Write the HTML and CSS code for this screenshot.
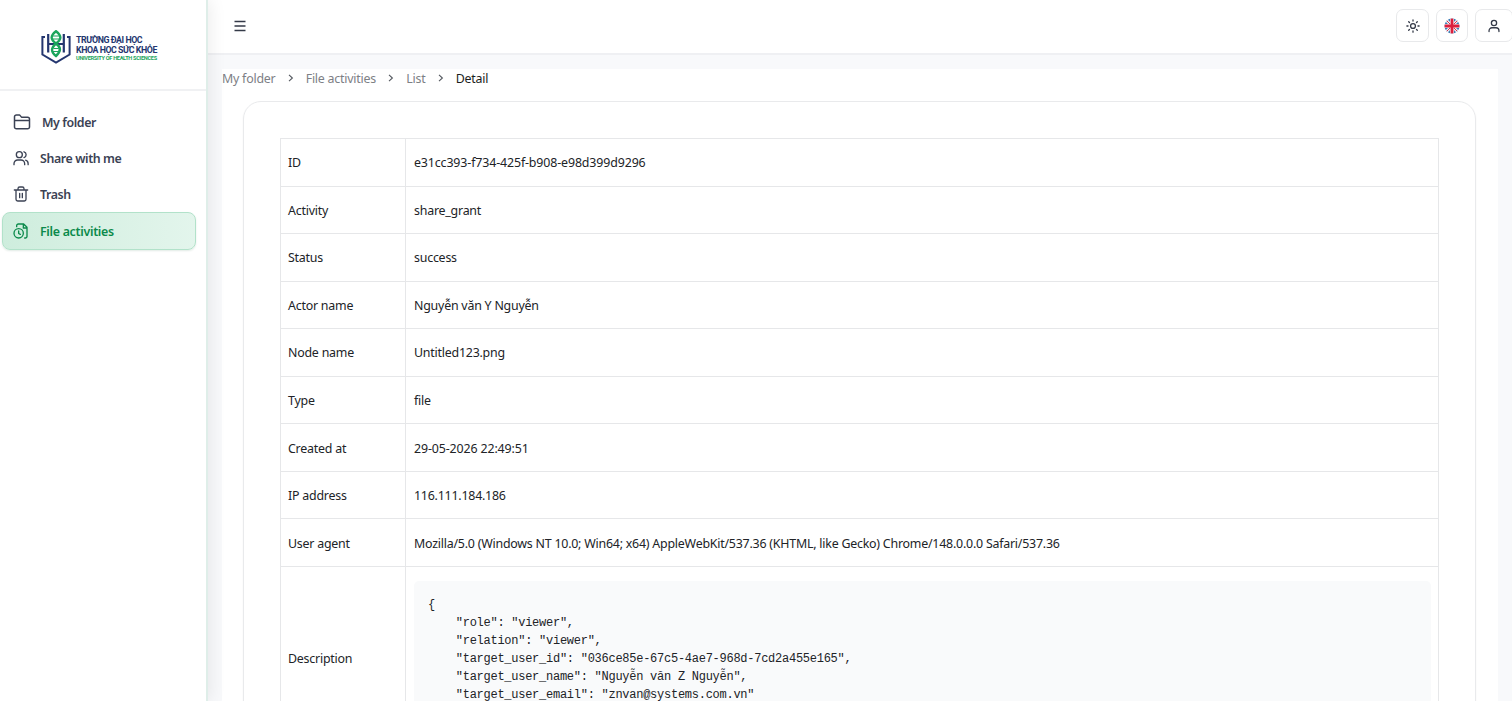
FILE: index.html
```html
<!DOCTYPE html>
<html lang="en">
<head>
  <meta charset="UTF-8" />
  <meta name="viewport" content="width=device-width, initial-scale=1.0"/>
  <title>File activities | Detail</title>
  <link rel="stylesheet" href="styles.css">
</head>
<body>
  <aside class="sidebar">
    <div class="brand">
      <svg class="brand-mark" viewBox="0 0 30 34" fill="none">
        <path d="M4 7H1.400v17.500L15 32.700l13.600-8.200V7H26" stroke="#24366f" stroke-width="2"/>
        <path d="M7.200 4v18.500M22.800 4v18.500M7.200 14h15.600" stroke="#24366f" stroke-width="2.200"/>
        <path d="M15 1.200c-6.500 5-5 8.500 0 12.300s5 8 0 12.500c-5.500-4.500-5-8 0-12.500 5-3.800 6.500-7.300 0-12.300zM15 13.500c5.500 4 5 8 0 12.500" fill="#fff" stroke="#1ba55c" stroke-width="2.400"/>
        <path d="M12 6h6M12 9h6M12.500 18.500h5M12 21.500h6" stroke="#1ba55c" stroke-width="1.200"/>
      </svg>
      <div class="brand-text">
        <span class="brand-line">TRƯỜNG ĐẠI HỌC</span>
        <span class="brand-line">KHOA HỌC SỨC KHỎE</span>
        <span class="brand-sub">UNIVERSITY OF HEALTH SCIENCES</span>
      </div>
    </div>
    <nav class="menu">
      <a class="menu-item folder" href="#">
        <svg class="icon" viewBox="0 0 24 24"><path d="M2 5a2.500 2.500 0 0 1 2.500-2.500h4.200l2.600 3H19.500A2.500 2.500 0 0 1 22 8v10.500a2.500 2.500 0 0 1-2.500 2.500h-15A2.500 2.500 0 0 1 2 18.500zM2 10h20"/></svg>
        <span>My folder</span>
      </a>
      <a class="menu-item" href="#">
        <svg class="icon" viewBox="0 0 24 24"><circle cx="9.500" cy="7" r="4.500"/><path d="M1.500 22v-1.500a5.500 5.500 0 0 1 5.500-5.500h5a5.500 5.500 0 0 1 5.500 5.500V22M16.500 2.700a4.500 4.500 0 0 1 0 8.600M19 15.200a5.500 5.500 0 0 1 3.700 5.300V22"/></svg>
        <span>Share with me</span>
      </a>
      <a class="menu-item" href="#">
        <svg class="icon" viewBox="0 0 24 24"><path d="M2 6h20M4.500 6v14A2.500 2.500 0 0 0 7 22.500h10a2.500 2.500 0 0 0 2.500-2.500V6M7.500 6V4A2.500 2.500 0 0 1 10 1.500h4A2.500 2.500 0 0 1 16.500 4v2M10 11v6.500M14 11v6.500"/></svg>
        <span>Trash</span>
      </a>
      <a class="menu-item active" href="#">
        <svg class="icon" viewBox="0 0 24 24"><circle cx="8.500" cy="15.500" r="7"/><path d="M8.500 12v3.700l2.500 1.300M5.500 5.500V4A2.500 2.500 0 0 1 8 1.500h8L21 6.500V20a2.500 2.500 0 0 1-2.500 2.500h-1M15.500 2v5.500H21"/></svg>
        <span>File activities</span>
      </a>
    </nav>
  </aside>

  <div class="main">
    <header class="topbar">
      <svg class="burger" viewBox="0 0 12 12"><path d="M.5 1.500h11M.5 6h11M.5 10.500h11"/></svg>
      <div class="actions">
        <button class="action-btn">
          <svg class="action-icon" viewBox="0 0 24 24"><circle cx="12" cy="12" r="4.200"/><path d="M12 1.500v2M12 20.500v2M1.500 12h2M20.500 12h2M4.600 4.600l1.400 1.400M18 18l1.400 1.400M4.600 19.400l1.400-1.400M18 6l1.400-1.400"/></svg>
        </button>
        <button class="action-btn">
          <svg class="flag" viewBox="0 0 16 16">
            <defs><clipPath id="round"><circle cx="8" cy="8" r="7.500"/></clipPath></defs>
            <g clip-path="url(#round)">
              <rect width="16" height="16" fill="#3f7fb8"/>
              <path d="M0 0l16 16M16 0L0 16" stroke="#f3f3f3" stroke-width="3"/>
              <path d="M0 0l16 16M16 0L0 16" stroke="#d9304c" stroke-width="1"/>
              <path d="M8 0v16M0 8h16" stroke="#f3f3f3" stroke-width="4"/>
              <path d="M8 0v16M0 8h16" stroke="#dc1f3d" stroke-width="2.800"/>
            </g>
          </svg>
        </button>
        <button class="action-btn user">
          <svg class="action-icon" viewBox="0 0 24 24"><circle cx="12" cy="7" r="4.500"/><path d="M3.500 21.500V20a5 5 0 0 1 5-5h7a5 5 0 0 1 5 5v1.500"/></svg>
        </button>
      </div>
    </header>

    <main class="content">
      <div class="breadcrumb">
        <a class="crumb" href="#">My folder</a>
        <svg class="chevron" viewBox="0 0 8 8"><path d="M2 .8L5.400 4 2 7.200"/></svg>
        <a class="crumb" href="#">File activities</a>
        <svg class="chevron" viewBox="0 0 8 8"><path d="M2 .8L5.400 4 2 7.200"/></svg>
        <a class="crumb" href="#">List</a>
        <svg class="chevron" viewBox="0 0 8 8"><path d="M2 .8L5.400 4 2 7.200"/></svg>
        <span class="crumb current">Detail</span>
      </div>

      <section class="card">
        <div class="details">
          <div class="row"><div class="label">ID</div><div class="value loose">e31cc393-f734-425f-b908-e98d399d9296</div></div>
          <div class="row"><div class="label">Activity</div><div class="value">share_grant</div></div>
          <div class="row"><div class="label">Status</div><div class="value">success</div></div>
          <div class="row"><div class="label">Actor name</div><div class="value">Nguyễn văn Y Nguyễn</div></div>
          <div class="row"><div class="label">Node name</div><div class="value">Untitled123.png</div></div>
          <div class="row"><div class="label">Type</div><div class="value">file</div></div>
          <div class="row"><div class="label">Created at</div><div class="value loose">29-05-2026 22:49:51</div></div>
          <div class="row"><div class="label">IP address</div><div class="value">116.111.184.186</div></div>
          <div class="row"><div class="label">User agent</div><div class="value">Mozilla/5.0 (Windows NT 10.0; Win64; x64) AppleWebKit/537.36 (KHTML, like Gecko) Chrome/148.0.0.0 Safari/537.36</div></div>
          <div class="row description"><div class="label">Description</div><div class="value"><pre>{
    "role": "viewer",
    "relation": "viewer",
    "target_user_id": "036ce85e-67c5-4ae7-968d-7cd2a455e165",
    "target_user_name": "Nguyễn văn Z Nguyễn",
    "target_user_email": "znvan@systems.com.vn"
}</pre></div></div>
        </div>
      </section>
    </main>
  </div>
</body>
</html>
```
FILE: styles.css
```css
* {
  box-sizing: border-box;
}
body {
  margin: 0;
  height: 100vh;
  display: flex;
  overflow: hidden;
  background: #f8f9fb;
  font-family: "Noto Sans", "Open Sans", sans-serif;
  font-size: 12.4px;
  letter-spacing: -0.22px;
  color: #212327;
}
a {
  text-decoration: none;
  color: inherit;
}
.sidebar {
  width: 208px;
  flex: none;
  background: #fff;
  border-right: 2px solid #dfeee9;
  box-shadow: 2px 0 16px rgba(0, 0, 0, 0.08);
  position: relative;
  z-index: 2;
}
.brand {
  height: 91px;
  display: flex;
  align-items: center;
  padding: 4px 0 0 41px;
  gap: 5px;
  border-bottom: 2px solid #f0f1f3;
}
.brand-mark {
  width: 30px;
  height: 34px;
}
.brand-text {
  display: flex;
  flex-direction: column;
  white-space: nowrap;
  font-family: Roboto, sans-serif;
  font-weight: 700;
  color: #24366f;
  padding-top: 3px;
}
.brand-line {
  font-size: 8.8px;
  line-height: 10px;
  letter-spacing: -0.45px;
}
.brand-sub {
  font-size: 5.6px;
  line-height: 7px;
  letter-spacing: -0.3px;
  color: #1ba55c;
}
.menu {
  padding: 13px 10px 0 2px;
}
.menu-item {
  height: 36px;
  display: flex;
  align-items: center;
  gap: 11px;
  padding-left: 11px;
  font-weight: 600;
  letter-spacing: -0.4px;
  color: #3b4254;
}
.icon {
  width: 16px;
  height: 16px;
  fill: none;
  stroke: currentColor;
  stroke-width: 2;
  stroke-linecap: round;
  stroke-linejoin: round;
}
.folder .icon {
  width: 18px;
  height: 18px;
}
.menu-item.active {
  height: 38px;
  padding-left: 10px;
  letter-spacing: -0.3px;
  color: #0b8a4b;
  background: linear-gradient(90deg, #ceeddd, #e3f5ec);
  border: 1px solid #b2e2ca;
  border-radius: 8px;
  box-shadow: 0 1px 2px rgba(0, 80, 40, 0.12);
}
.main {
  flex: 1;
  min-width: 0;
}
.topbar {
  height: 55px;
  display: flex;
  align-items: center;
  justify-content: space-between;
  padding: 0 0 2px 26px;
  background: #fff;
  border-bottom: 2px solid #eff0f3;
}
.burger {
  width: 12px;
  height: 12px;
  fill: none;
  stroke: #343a48;
  stroke-width: 1.3;
}
.actions {
  display: flex;
  gap: 7px;
  margin-right: -1.4px;
}
.action-btn {
  width: 32.6px;
  height: 33px;
  padding: 0;
  display: flex;
  align-items: center;
  justify-content: center;
  background: #fff;
  border: 1px solid #e8e9eb;
  border-radius: 7px;
}
.action-btn.user {
  width: 38px;
}
.action-icon {
  width: 14px;
  height: 14px;
  fill: none;
  stroke: #343a48;
  stroke-width: 2.2;
  stroke-linecap: round;
}
.flag {
  width: 16px;
  height: 16px;
}
.content {
  margin: 14px 14px 0;
  background: #fff;
}
.breadcrumb {
  height: 18px;
  display: flex;
  align-items: center;
  gap: 11.1px;
  color: #7d8085;
}
.chevron {
  width: 8px;
  height: 8px;
  fill: none;
  stroke: #54585f;
  stroke-width: 1.1;
}
.current {
  color: #1b1d21;
}
.card {
  margin: 14px 22px 0 21px;
  padding: 36px 36px 37px;
  border: 1px solid #e9eaec;
  border-radius: 18px;
  box-shadow: 0 1px 2px rgba(0, 0, 0, 0.06);
}
.details {
  border: 1px solid #e6e7e9;
  border-bottom: none;
}
.row {
  height: 47.55px;
  display: flex;
  border-bottom: 1px solid #e6e7e9;
}
.label,
.value {
  display: flex;
  align-items: center;
  padding: 1px 7px 0;
}
.label {
  width: 125px;
  flex: none;
  border-right: 1px solid #e6e7e9;
}
.value {
  flex: 1;
  padding-left: 8px;
}
.value.loose {
  letter-spacing: -0.13px;
}
.row.description {
  height: 184px;
}
.description .value {
  padding-top: 0;
}
pre {
  flex: 1;
  margin: 0;
  padding: 15px 14px 13px;
  background: #f9fafb;
  border-radius: 5px;
  font-family: "Liberation Mono", monospace;
  font-size: 12px;
  line-height: 18px;
  letter-spacing: -0.26px;
}
```
